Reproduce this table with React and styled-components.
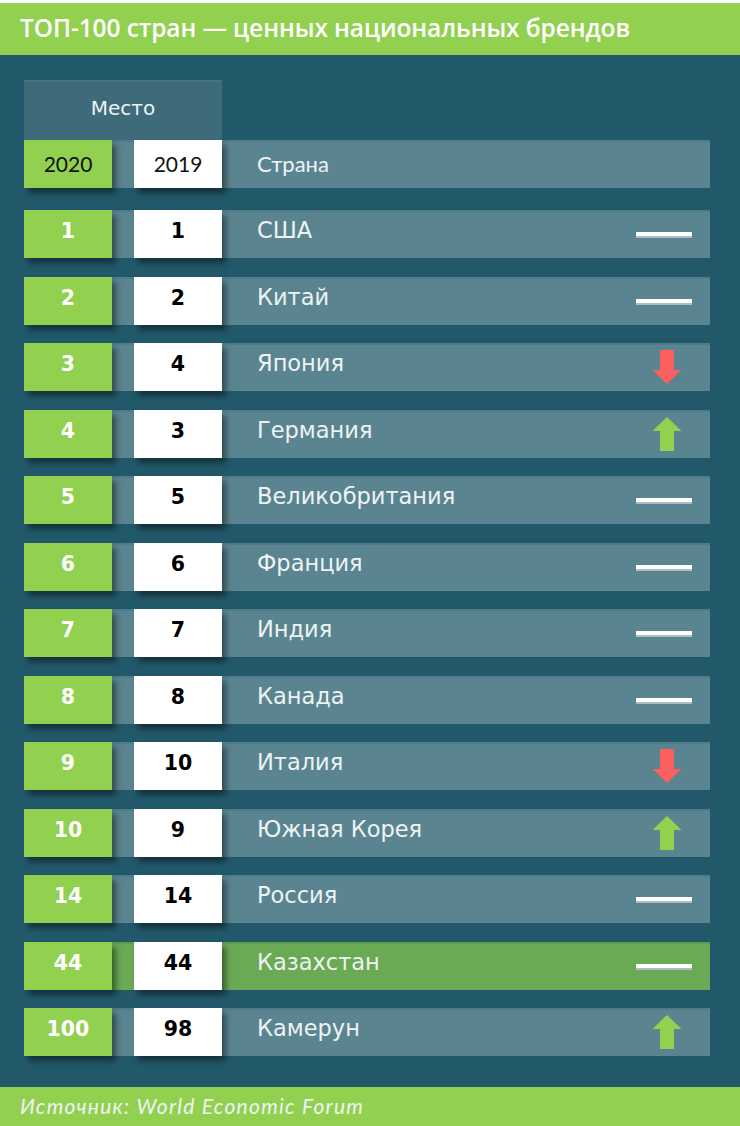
import React from "react";
import styled, { createGlobalStyle } from "styled-components";

const colors = {
	green: "#92d050",
	teal: "#22596a",
	tealHead: "#3d6b79",
	bar: "#5a8590",
	barLine: "#4f7c88",
	highlight: "#6aaa55",
	highlightLine: "#5f9c4c",
	red: "#fa6060",
	white: "#ffffff",
	light: "#eef3f4",
};

const sans = '"DejaVu Sans", Verdana, sans-serif';
const narrow = 'Lato, "Open Sans", sans-serif';

const GlobalStyle = createGlobalStyle`
	body {
		margin: 0;
		background: ${colors.white};
	}
`;

const Page = styled.div`
	width: 740px;
	height: 1126px;
	display: flex;
	flex-direction: column;
	padding-top: 3px;
	box-sizing: border-box;
	background: ${colors.white};
`;

const TitleBar = styled.div`
	height: 52px;
	background: ${colors.green};
	display: flex;
	align-items: center;
	padding-left: 20px;
	padding-bottom: 3px;
	box-sizing: border-box;
`;

const Title = styled.h1`
	margin: 0;
	color: ${colors.white};
	font-family: "Open Sans", Lato, sans-serif;
	font-weight: 600;
	font-size: 24.5px;
	letter-spacing: -0.1px;
	white-space: nowrap;
`;

const Body = styled.div`
	flex: 1;
	background: ${colors.teal};
	padding: 25px 30px 0 24px;
	display: flex;
	flex-direction: column;
`;

const PlaceHead = styled.div`
	width: 198px;
	height: 60px;
	background: ${colors.tealHead};
	border-top: 2px solid #46737f;
	box-sizing: border-box;
	display: flex;
	align-items: center;
	justify-content: center;
	color: ${colors.light};
	font-family: ${sans};
	font-size: 20px;
	padding-bottom: 6px;
`;

const Rows = styled.div`
	display: flex;
	flex-direction: column;
	gap: 18.5px;
	margin-top: 22px;
`;

const Row = styled.div`
	height: 48px;
	display: flex;
	align-items: stretch;
	background: ${(p) => (p.$highlight ? colors.highlight : colors.bar)};
	box-shadow: inset 0 2px 0 ${(p) => (p.$highlight ? colors.highlightLine : colors.barLine)};
`;

const Cell = styled.div`
	width: 88px;
	flex-shrink: 0;
	display: flex;
	align-items: center;
	justify-content: center;
	padding-bottom: ${(p) => (p.$head ? "2px" : "6px")};
	box-sizing: border-box;
	background: ${(p) => (p.$green ? colors.green : colors.white)};
	color: ${(p) => (p.$head ? "#111" : p.$green ? colors.white : "#000")};
	box-shadow: 4px 5px 6px rgba(0, 0, 0, 0.45);
	font-family: ${(p) => (p.$head ? narrow : sans)};
	font-weight: ${(p) => (p.$head ? "normal" : "bold")};
	font-size: ${(p) => (p.$head ? "21px" : "20.5px")};
	margin-right: ${(p) => (p.$green ? "22px" : "0")};
`;

const Country = styled.div`
	flex: 1;
	display: flex;
	align-items: center;
	padding-left: 35px;
	padding-bottom: ${(p) => (p.$head ? "2px" : "8px")};
	color: ${colors.light};
	font-family: ${(p) => (p.$head ? narrow : sans)};
	font-size: ${(p) => (p.$head ? "22px" : "22.5px")};
`;

const Indicator = styled.div`
	width: 56px;
	margin-right: 18px;
	display: flex;
	align-items: center;
	justify-content: center;
`;

const Dash = styled.div`
	width: 56px;
	height: 4px;
	background: ${colors.white};
	border-bottom: 2px solid #a8bec4;
	margin-top: 2px;
`;

const ArrowIcon = styled.svg`
	margin-left: 6px;
	display: block;
`;

const Footer = styled.div`
	height: 39px;
	background: ${colors.green};
	display: flex;
	align-items: center;
	padding-left: 20px;
	padding-bottom: 2px;
	box-sizing: border-box;
	color: ${colors.light};
	font-family: ${narrow};
	font-style: italic;
	font-size: 21px;
	letter-spacing: 1.25px;
	white-space: nowrap;
`;

const Arrow = ({ up }) => (
	<ArrowIcon width="30" height="34" viewBox="0 0 30 34">
		{up ? (
			<path d="M15 0 L29.5 14 L22 14 L22 34 L8 34 L8 14 L0.5 14 Z" fill={colors.green} />
		) : (
			<path d="M8 0 L22 0 L22 20 L29.5 20 L15 34 L0.5 20 L8 20 Z" fill={colors.red} />
		)}
	</ArrowIcon>
);

// trend: "same" dash, "fell" red down arrow, "rose" green up arrow
const data = [
	["1", "1", "США", "same"],
	["2", "2", "Китай", "same"],
	["3", "4", "Япония", "fell"],
	["4", "3", "Германия", "rose"],
	["5", "5", "Великобритания", "same"],
	["6", "6", "Франция", "same"],
	["7", "7", "Индия", "same"],
	["8", "8", "Канада", "same"],
	["9", "10", "Италия", "fell"],
	["10", "9", "Южная Корея", "rose"],
	["14", "14", "Россия", "same"],
	["44", "44", "Казахстан", "same", true],
	["100", "98", "Камерун", "rose"],
];

const Trend = ({ kind }) => {
	if (kind === "same") return <Dash />;
	return <Arrow up={kind === "rose"} />;
};

const App = () => {
	return (
		<Page>
			<GlobalStyle />
			<TitleBar>
				<Title>ТОП-100 стран — ценных национальных брендов</Title>
			</TitleBar>
			<Body>
				<PlaceHead>Место</PlaceHead>
				<Row>
					<Cell $green $head>2020</Cell>
					<Cell $head>2019</Cell>
					<Country $head>Страна</Country>
				</Row>
				<Rows>
					{data.map(([now, before, name, trend, hl]) => (
						<Row key={name} $highlight={hl}>
							<Cell $green>{now}</Cell>
							<Cell>{before}</Cell>
							<Country>{name}</Country>
							<Indicator>
								<Trend kind={trend} />
							</Indicator>
						</Row>
					))}
				</Rows>
			</Body>
			<Footer>Источник: World Economic Forum</Footer>
		</Page>
	);
};

export default App;
